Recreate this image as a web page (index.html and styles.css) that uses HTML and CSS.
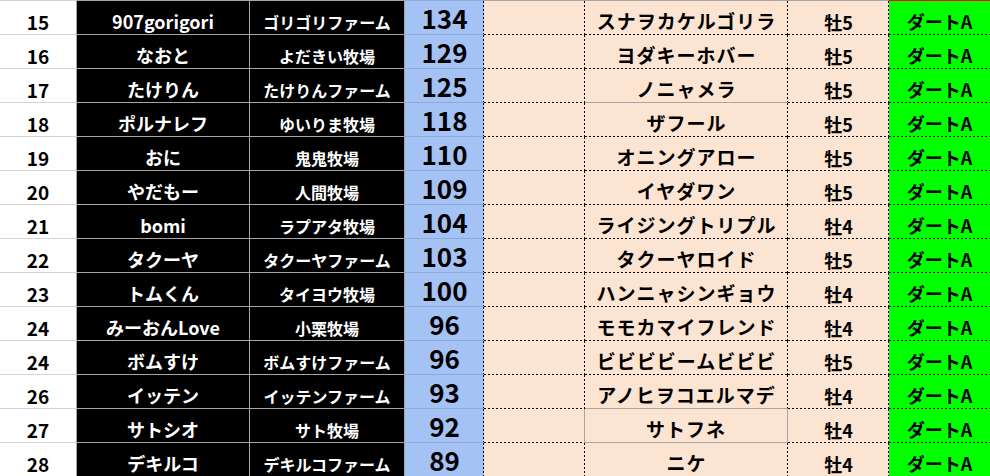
FILE: index.html
```html
<!DOCTYPE html>
<html lang="ja">
<head>
<meta charset="utf-8">
<title>ランキング</title>
<link rel="stylesheet" href="styles.css">
</head>
<body>
<div class="sheet">
  <div class="row first">
    <div class="c num">15</div><div class="c name">907gorigori</div><div class="c farm">ゴリゴリファーム</div><div class="c score">134</div><div class="c o blank"></div><div class="c o horse">スナヲカケルゴリラ</div><div class="c o sex">牡5</div><div class="c g grade">ダートA</div>
  </div>
  <div class="row">
    <div class="c num">16</div><div class="c name">なおと</div><div class="c farm">よだきい牧場</div><div class="c score">129</div><div class="c o blank"></div><div class="c o horse">ヨダキーホバー</div><div class="c o sex">牡5</div><div class="c g grade">ダートA</div>
  </div>
  <div class="row">
    <div class="c num">17</div><div class="c name">たけりん</div><div class="c farm">たけりんファーム</div><div class="c score">125</div><div class="c o blank"></div><div class="c o horse above-sel">ノニャメラ</div><div class="c o sex">牡5</div><div class="c g grade">ダートA</div>
  </div>
  <div class="row">
    <div class="c num">18</div><div class="c name">ポルナレフ</div><div class="c farm">ゆいりま牧場</div><div class="c score">118</div><div class="c o blank"></div><div class="c o horse">ザフール</div><div class="c o sex">牡5</div><div class="c g grade">ダートA</div>
  </div>
  <div class="row">
    <div class="c num">19</div><div class="c name">おに</div><div class="c farm">鬼鬼牧場</div><div class="c score">110</div><div class="c o blank"></div><div class="c o horse">オニングアロー</div><div class="c o sex">牡5</div><div class="c g grade">ダートA</div>
  </div>
  <div class="row">
    <div class="c num">20</div><div class="c name">やだもー</div><div class="c farm">人間牧場</div><div class="c score">109</div><div class="c o blank"></div><div class="c o horse">イヤダワン</div><div class="c o sex">牡5</div><div class="c g grade">ダートA</div>
  </div>
  <div class="row">
    <div class="c num">21</div><div class="c name">bomi</div><div class="c farm">ラプアタ牧場</div><div class="c score">104</div><div class="c o blank"></div><div class="c o horse">ライジングトリプル</div><div class="c o sex">牡4</div><div class="c g grade">ダートA</div>
  </div>
  <div class="row">
    <div class="c num">22</div><div class="c name">タクーヤ</div><div class="c farm">タクーヤファーム</div><div class="c score">103</div><div class="c o blank"></div><div class="c o horse">タクーヤロイド</div><div class="c o sex">牡5</div><div class="c g grade">ダートA</div>
  </div>
  <div class="row">
    <div class="c num">23</div><div class="c name">トムくん</div><div class="c farm">タイヨウ牧場</div><div class="c score">100</div><div class="c o blank"></div><div class="c o horse">ハンニャシンギョウ</div><div class="c o sex">牡4</div><div class="c g grade">ダートA</div>
  </div>
  <div class="row">
    <div class="c num">24</div><div class="c name">みーおんLove</div><div class="c farm">小栗牧場</div><div class="c score">96</div><div class="c o blank"></div><div class="c o horse">モモカマイフレンド</div><div class="c o sex">牡4</div><div class="c g grade">ダートA</div>
  </div>
  <div class="row">
    <div class="c num">24</div><div class="c name">ボムすけ</div><div class="c farm">ボムすけファーム</div><div class="c score">96</div><div class="c o blank"></div><div class="c o horse">ビビビビームビビビ</div><div class="c o sex">牡5</div><div class="c g grade">ダートA</div>
  </div>
  <div class="row">
    <div class="c num">26</div><div class="c name">イッテン</div><div class="c farm">イッテンファーム</div><div class="c score">93</div><div class="c o blank"></div><div class="c o horse above-sel">アノヒヲコエルマデ</div><div class="c o sex">牡4</div><div class="c g grade">ダートA</div>
  </div>
  <div class="row">
    <div class="c num">27</div><div class="c name">サトシオ</div><div class="c farm">サト牧場</div><div class="c score">92</div><div class="c o blank before-sel"></div><div class="c o horse sel">サトフネ</div><div class="c o sex">牡4</div><div class="c g grade">ダートA</div>
  </div>
  <div class="row">
    <div class="c num">28</div><div class="c name">デキルコ</div><div class="c farm">デキルコファーム</div><div class="c score">89</div><div class="c o blank"></div><div class="c o horse">ニケ</div><div class="c o sex">牡4</div><div class="c g grade">ダートA</div>
  </div>
</div>
</body>
</html>
```

FILE: styles.css
```css
html, body {
  margin: 0;
  padding: 0;
  background: #ffffff;
}

body {
  width: 990px;
  height: 476px;
  overflow: hidden;
  font-family: "Noto Sans CJK JP", "Noto Sans", sans-serif;
  font-weight: 700;
  color: #000;
}

.sheet {
  display: flex;
  flex-direction: column;
}

.row {
  display: grid;
  grid-template-columns: 77px 173px 155px 79px 101px 203px 101px 101px;
  height: 34px;
}

.row.first {
  height: 35px;
}

.c {
  box-sizing: border-box;
  display: flex;
  align-items: center;
  justify-content: center;
  white-space: nowrap;
  line-height: 1;
}

.num {
  background: #ffffff;
  border-right: 1px solid #a6a6a6;
  border-bottom: 1px solid #d4d4d4;
  font-size: 19px;
  padding-top: 8px;
}

.name {
  background: #000;
  color: #fff;
  border-right: 1px solid #a6a6a6;
  border-bottom: 1px solid #a6a6a6;
  font-size: 18px;
  padding-top: 6px;
}

.farm {
  background: #000;
  color: #fff;
  border-right: 1px solid #a6a6a6;
  border-bottom: 1px solid #a6a6a6;
  font-size: 16px;
  padding-top: 8px;
}

.score {
  background-color: #a4c2f4;
  border-bottom: 1px solid #8eaadb;
  font-size: 26px;
  line-height: 30px;
  background-image: repeating-linear-gradient(180deg, #000 0 2px, transparent 2px 4px);
  background-size: 1px 100%;
  background-position: right top;
  background-repeat: no-repeat;
}

.o,
.g {
  background-image:
    repeating-linear-gradient(90deg, #000 0 2px, transparent 2px 4px),
    repeating-linear-gradient(180deg, #000 0 2px, transparent 2px 4px);
  background-size: 100% 1px, 1px 100%;
  background-position: left bottom, right top;
  background-repeat: no-repeat;
}

.o {
  background-color: #fce4d3;
}

.g {
  background-color: #00ff00;
  background-image: repeating-linear-gradient(90deg, #000 0 2px, transparent 2px 4px);
  background-size: 100% 1px;
  background-position: left bottom;
}

.first .c {
  border-top: 1px solid #a6a6a6;
}

.first .num {
  border-top-color: #d4d4d4;
}

.first .score {
  border-top-color: #8eaadb;
}

.first .g {
  border-top: 1px solid #ff0000;
}

.horse {
  font-size: 19px;
  letter-spacing: 1px;
  padding-top: 5px;
}

.sex {
  font-size: 18px;
  padding-top: 7px;
}

.grade {
  font-size: 18px;
  padding-top: 6px;
}

/* solid grey borders around the active cell */
.horse.above-sel {
  background-image: repeating-linear-gradient(180deg, #000 0 2px, transparent 2px 4px);
  background-size: 1px 100%;
  background-position: right top;
  border-bottom: 1px solid #a6a6a6;
}

.horse.sel {
  background-image: none;
  border-bottom: 1px solid #a6a6a6;
  border-right: 1px solid #a6a6a6;
}

.blank.before-sel {
  background-image: repeating-linear-gradient(90deg, #000 0 2px, transparent 2px 4px);
  background-size: 100% 1px;
  background-position: left bottom;
  border-right: 1px solid #a6a6a6;
}
```
